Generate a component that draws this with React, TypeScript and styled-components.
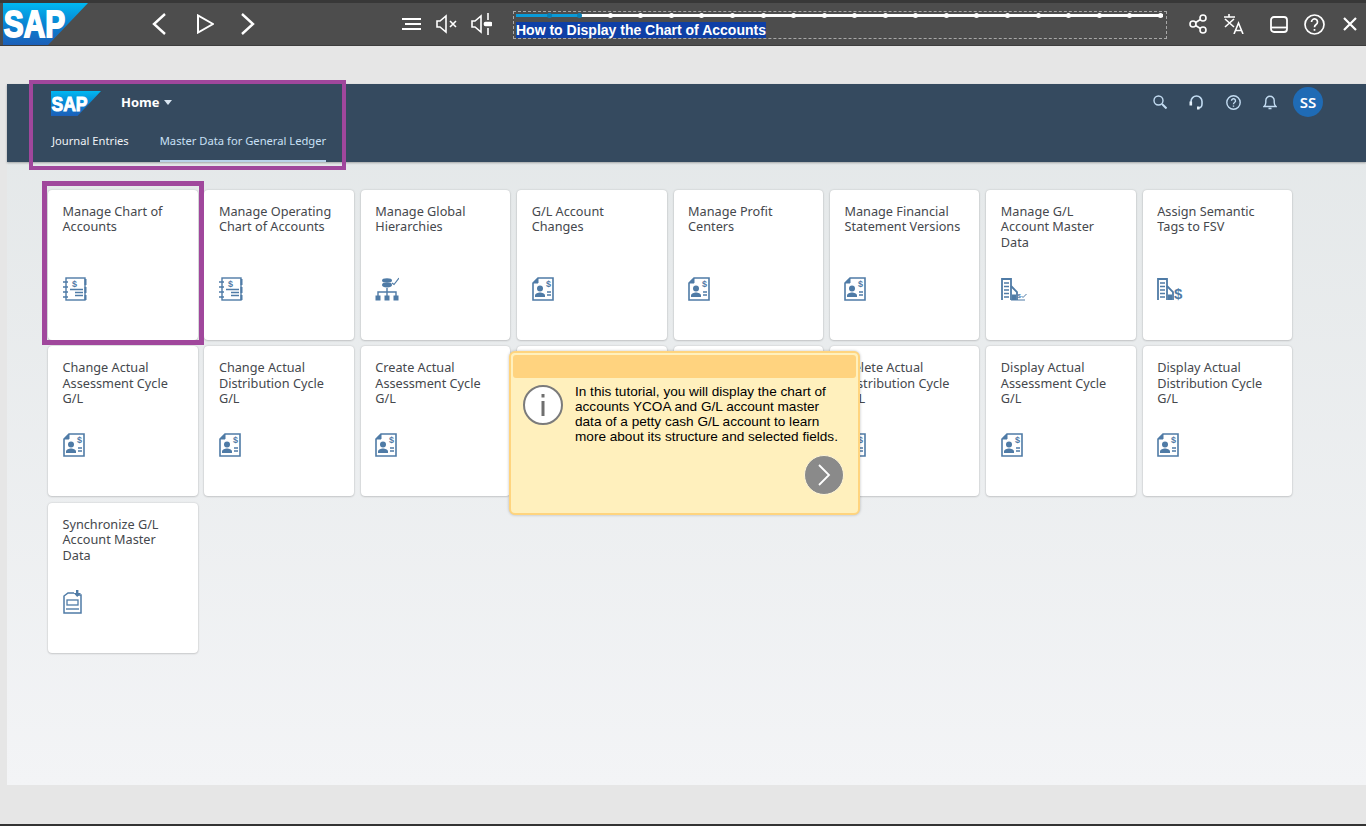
import React from 'react';
import styled, { createGlobalStyle } from 'styled-components';

const ICON_BLUE = '#4f7ba6';

const GlobalStyle = createGlobalStyle`
  html, body {
    margin: 0;
    padding: 0;
    background: #e6e6e6;
    overflow: hidden;
  }
  * { box-sizing: border-box; }
`;

const Page = styled.div`
  position: relative;
  width: 1366px;
  height: 826px;
  display: flex;
  flex-direction: column;
  background: #e6e6e6;
  font-family: 'Noto Sans', 'Open Sans', sans-serif;
`;

const PlayerBar = styled.header`
  height: 46px;
  display: flex;
  align-items: center;
  background: #4d4d4d;
  border-top: 3px solid #383838;
  border-bottom: 1px solid #3d3d3d;
`;

const PlayerLogo = styled.div`
  width: 88px;
  height: 42px;
  padding-left: 3px;
  flex: none;
`;

const PlayerGroup = styled.div<{ $left: number; $gap: number }>`
  display: flex;
  align-items: center;
  margin-left: ${(p) => p.$left}px;
  gap: ${(p) => p.$gap}px;
`;

const PlayerIcon = styled.svg<{ $stroke?: number; $shift?: number }>`
  display: block;
  fill: none;
  stroke: #fff;
  stroke-width: ${(p) => p.$stroke ?? 2};
  margin-left: ${(p) => p.$shift ?? 0}px;
  flex: none;
`;

const ProgressBox = styled.div`
  width: 654px;
  height: 28px;
  margin-left: 21px;
  margin-top: 2px;
  padding: 2px 2px 0;
  border: 1px dashed #a8a8a8;
`;

const Track = styled.div`
  position: relative;
  height: 3px;
  width: 647px;
  background: #fff;
  display: flex;
  justify-content: space-between;
  align-items: center;
`;

const TrackFill = styled.div`
  position: absolute;
  left: 0;
  top: 0;
  width: 62px;
  height: 3px;
  background: #0a9bd8;
`;

const TrackDot = styled.i<{ $done?: boolean; $hidden?: boolean }>`
  position: relative;
  width: 5px;
  height: 5px;
  border-radius: 50%;
  background: ${(p) => (p.$done ? '#0a7fb5' : '#fff')};
  visibility: ${(p) => (p.$hidden ? 'hidden' : 'visible')};
`;

const LessonTitle = styled.div`
  margin-top: 5px;
  display: inline-block;
  background: #0e3fa6;
  color: #fff;
  font: bold 14px/16px 'Liberation Sans', Arial, sans-serif;
`;

const Frame = styled.main`
  width: 1359px;
  height: 701px;
  margin: 38px 0 0 7px;
  display: flex;
  flex-direction: column;
  background: linear-gradient(180deg, #e3e7e8 0%, #f3f4f6 100%);
`;

const ShellHeader = styled.div`
  height: 78px;
  padding: 7px 43px 0 44px;
  background: #354a5f;
  box-shadow: 0 1px 2px rgba(0, 0, 0, 0.3);
  flex: none;
`;

const ShellTop = styled.div`
  height: 25px;
  display: flex;
  align-items: center;
`;

const HomeLabel = styled.span`
  margin: -3px 0 0 20px;
  color: #fff;
  font-size: 13px;
  font-weight: 700;
  font-family: 'Open Sans', sans-serif;
  line-height: 22px;
`;

const Caret = styled.span`
  width: 0;
  height: 0;
  margin: -2px 0 0 5px;
  border-left: 4.5px solid transparent;
  border-right: 4.5px solid transparent;
  border-top: 5px solid #d9e6f2;
`;

const ShellActions = styled.div`
  margin: -3px 0 0 auto;
  display: flex;
  align-items: center;
  gap: 22px;
`;

const ShellIcon = styled.svg`
  display: block;
  fill: none;
  stroke: #c3dcf2;
  stroke-width: 1.4;
  flex: none;
`;

const Avatar = styled.div`
  width: 30px;
  height: 30px;
  margin-left: -6px;
  border-radius: 50%;
  background: #1f6bb5;
  color: #fff;
  font-size: 15px;
  font-weight: 600;
  display: flex;
  align-items: center;
  justify-content: center;
`;

const TabRow = styled.nav`
  margin-top: 11px;
  display: flex;
  gap: 30px;
`;

const Tab = styled.div<{ $active?: boolean }>`
  height: 35px;
  padding-top: 6px;
  margin-left: 1px;
  font-size: 11.2px;
  line-height: 16px;
  color: ${(p) => (p.$active ? '#c9e0f5' : '#f0f3f6')};
  border-bottom: 2px solid ${(p) => (p.$active ? '#b9d3ea' : 'transparent')};
`;

const TileGrid = styled.section`
  padding: 27.5px 0 0 41px;
  display: grid;
  grid-template-columns: repeat(8, 149.5px);
  grid-auto-rows: 150px;
  column-gap: 6.9px;
  row-gap: 6.5px;
`;

const Tile = styled.article`
  padding: 14px 14.5px 0;
  background: #fff;
  border-radius: 4px;
  box-shadow: 0 0 2px rgba(0, 0, 0, 0.18), 0 1px 2px rgba(0, 0, 0, 0.12);
`;

const TileTitle = styled.div`
  height: 73px;
  color: #45484d;
  font-size: 12.7px;
  line-height: 15.5px;
`;

const Highlight = styled.div<{ $x: number; $y: number; $w: number; $h: number; $b: number }>`
  position: absolute;
  left: ${(p) => p.$x}px;
  top: ${(p) => p.$y}px;
  width: ${(p) => p.$w}px;
  height: ${(p) => p.$h}px;
  border: ${(p) => p.$b}px solid #a0479c;
  pointer-events: none;
`;

const Callout = styled.aside`
  position: absolute;
  left: 509px;
  top: 351px;
  width: 351px;
  height: 164px;
  padding: 2px;
  background: #fff0bd;
  border: 2px solid #ffd47e;
  border-radius: 6px;
  box-shadow: 0 0 3px rgba(0, 0, 0, 0.25);
  display: flex;
  flex-direction: column;
`;

const CalloutBand = styled.div`
  height: 23px;
  flex: none;
  background: #ffd37f;
  border-radius: 3px;
`;

const CalloutBody = styled.div`
  display: flex;
  padding: 6px 0 0 10px;
`;

const InfoBadge = styled.div`
  width: 40px;
  height: 40px;
  margin-top: 1px;
  flex: none;
  border-radius: 50%;
  background: #fff;
  border: 2px solid #7b7b7b;
  display: flex;
  align-items: center;
  justify-content: center;
`;

const InfoStem = styled.svg`
  display: block;
`;

const CalloutText = styled.p`
  margin: 0 0 0 12px;
  width: 272px;
  color: #000;
  font: 13.6px/15px 'Liberation Sans', Arial, sans-serif;
`;

const NextButton = styled.div`
  position: absolute;
  right: 14px;
  bottom: 18px;
  width: 40px;
  height: 40px;
  border-radius: 50%;
  background: #8a8a8a;
  border: 1px solid #fff6d8;
  display: flex;
  align-items: center;
  justify-content: center;
`;

const BottomEdge = styled.div`
  margin-top: auto;
  height: 2px;
  background: #333;
  flex: none;
`;

const TileIcon = styled.svg`
  display: block;
  fill: none;
  stroke: ${ICON_BLUE};
`;

const IconGlyph = styled.text<{ $size?: number }>`
  fill: ${ICON_BLUE};
  stroke: none;
  font: bold ${(p) => p.$size ?? 9}px 'Liberation Sans', Arial, sans-serif;
`;

const LogoSvg = styled.svg`
  display: block;
  flex: none;
`;

const LogoText = styled.text`
  fill: #fff;
  stroke: #fff;
  font-family: 'Liberation Sans', Arial, sans-serif;
  font-weight: 700;
`;

const SapLogo = ({ width, height, id, fontSize, y }: { width: number; height: number; id: string; fontSize: number; y: number }) => (
  <LogoSvg width={width} height={height} viewBox={`0 0 ${width} ${height}`}>
    <defs>
      <linearGradient id={id} x1="0" y1="0" x2="0" y2="1">
        <stop offset="0" stopColor="#00b8f1" />
        <stop offset="0.55" stopColor="#0a7fd0" />
        <stop offset="1" stopColor="#1c5fb8" />
      </linearGradient>
    </defs>
    <polygon points={`0,0 ${width},0 ${width * 0.53},${height} 0,${height}`} fill={`url(#${id})`} />
    <LogoText
      x={width * 0.01}
      y={y}
      fontSize={fontSize}
      textLength={width * 0.72}
      lengthAdjust="spacingAndGlyphs"
      strokeWidth={fontSize * 0.05}
    >
      SAP
    </LogoText>
  </LogoSvg>
);

const NotebookIcon = () => (
  <TileIcon width="24" height="24" viewBox="0 0 24 24">
    <rect x="3" y="1" width="19" height="22" strokeWidth="1.4" />
    <path d="M0 5h5M0 10h5M0 15h5M0 20h5" strokeWidth="1.5" />
    <path d="M22.5 2v6M22.5 10v6M22.5 18v5" strokeWidth="2" />
    <IconGlyph x="9" y="10">$</IconGlyph>
    <path d="M7 12.5h13M12 15.5h8M12 18.5h8" strokeWidth="1.3" />
  </TileIcon>
);

const LedgerDocIcon = () => (
  <TileIcon width="22" height="24" viewBox="0 0 22 24">
    <path d="M6 1h15v22H1V6z" strokeWidth="1.6" />
    <path d="M1 6h5V1z" fill={ICON_BLUE} strokeWidth="1" />
    <circle cx="8" cy="11.5" r="3" fill={ICON_BLUE} stroke="none" />
    <path d="M3 20v-1.5c0-2 3-3 5-3s5 1 5 3V20z" fill={ICON_BLUE} stroke="none" />
    <IconGlyph x="14" y="10">$</IconGlyph>
    <path d="M15 15h4M15 18h4" strokeWidth="1.3" />
  </TileIcon>
);

const HierarchyIcon = () => (
  <TileIcon width="24" height="24" viewBox="0 0 24 24">
    <ellipse cx="12" cy="3.5" rx="5" ry="2.2" fill={ICON_BLUE} stroke="none" />
    <ellipse cx="12" cy="8" rx="5" ry="2.4" fill={ICON_BLUE} stroke="none" />
    <path d="M17 6l2 1.5L24 1" strokeWidth="1.2" />
    <path d="M12 11v4M3 19v-4h18v4M12 15v4" strokeWidth="1.4" />
    <path d="M0.5 18.5h5v5h-5zM9.5 18.5h5v5h-5zM18.5 18.5h5v5h-5z" fill={ICON_BLUE} stroke="none" />
  </TileIcon>
);

const BuildingIcon = ({ check }: { check?: boolean }) => (
  <TileIcon width="26" height="24" viewBox="0 0 26 24">
    <path d="M1 23V2h9v21" strokeWidth="1.8" />
    <path d="M3 6h5M3 9.5h5M3 13h5M3 16.5h5M3 20h5" strokeWidth="1.6" />
    <path d="M10 9l6 6v8" strokeWidth="1.8" />
    <path d="M11 17.5h4V23h-4z" fill={ICON_BLUE} stroke="none" />
    {check ? (
      <>
        <IconGlyph x="16.5" y="21" $size={6}>$</IconGlyph>
        <path d="M20.5 19l1.5 1.5L25.5 17M10 23h14" strokeWidth="1" />
      </>
    ) : (
      <IconGlyph x="17" y="22" $size={15}>$</IconGlyph>
    )}
  </TileIcon>
);

const SyncIcon = () => (
  <TileIcon width="19" height="24" viewBox="0 0 19 24">
    <path d="M14 5h4v18H1V6l4-3h6" strokeWidth="1.5" />
    <path d="M13 0h2.4v3H18l-3.8 4-3.6-4H13z" fill={ICON_BLUE} stroke="none" />
    <rect x="4" y="10" width="11" height="5" strokeWidth="1.3" />
    <path d="M3 19h13" strokeWidth="1.4" />
  </TileIcon>
);

type TileData = { title?: string; icon?: React.ReactNode };

const tiles: TileData[] = [
  { title: 'Manage Chart of Accounts', icon: <NotebookIcon /> },
  { title: 'Manage Operating Chart of Accounts', icon: <NotebookIcon /> },
  { title: 'Manage Global Hierarchies', icon: <HierarchyIcon /> },
  { title: 'G/L Account Changes', icon: <LedgerDocIcon /> },
  { title: 'Manage Profit Centers', icon: <LedgerDocIcon /> },
  { title: 'Manage Financial Statement Versions', icon: <LedgerDocIcon /> },
  { title: 'Manage G/L Account Master Data', icon: <BuildingIcon check /> },
  { title: 'Assign Semantic Tags to FSV', icon: <BuildingIcon /> },
  { title: 'Change Actual Assessment Cycle G/L', icon: <LedgerDocIcon /> },
  { title: 'Change Actual Distribution Cycle G/L', icon: <LedgerDocIcon /> },
  { title: 'Create Actual Assessment Cycle G/L', icon: <LedgerDocIcon /> },
  {},
  {},
  { title: 'Delete Actual Distribution Cycle G/L', icon: <LedgerDocIcon /> },
  { title: 'Display Actual Assessment Cycle G/L', icon: <LedgerDocIcon /> },
  { title: 'Display Actual Distribution Cycle G/L', icon: <LedgerDocIcon /> },
  { title: 'Synchronize G/L Account Master Data', icon: <SyncIcon /> },
];

const steps = Array.from({ length: 22 }, (_, i) => i);

const App = () => (
  <Page>
    <GlobalStyle />
    <PlayerBar>
      <PlayerLogo>
        <SapLogo width={85} height={42} id="playerLogo" fontSize={37} y={33.5} />
      </PlayerLogo>
      <PlayerGroup $left={63} $gap={29}>
        <PlayerIcon width="16" height="22" viewBox="0 0 16 22" $stroke={2.4}>
          <path d="M14 1L3 11l11 10" />
        </PlayerIcon>
        <PlayerIcon width="18" height="20" viewBox="0 0 18 20">
          <path d="M2 1.5v17L17 10z" />
        </PlayerIcon>
        <PlayerIcon width="16" height="22" viewBox="0 0 16 22" $stroke={2.4} $shift={-3}>
          <path d="M2 1l11 10L2 21" />
        </PlayerIcon>
      </PlayerGroup>
      <PlayerGroup $left={146} $gap={14.5}>
        <PlayerIcon width="19" height="14" viewBox="0 0 19 14">
          <path d="M0 2h19M3 7h16M0 12h19" />
        </PlayerIcon>
        <PlayerIcon width="21" height="20" viewBox="0 0 21 20" $stroke={1.6}>
          <path d="M1 7v6h3l6 5V2L4 7zM14 7l6 6M20 7l-6 6" />
        </PlayerIcon>
        <PlayerIcon width="21" height="22" viewBox="0 0 21 22" $stroke={1.6}>
          <path d="M1 8v6h3l6 5V3L4 8zM17 0v7M17 15v7" />
          <rect x="13.5" y="9.5" width="7" height="3" rx="1" fill="#fff" />
        </PlayerIcon>
      </PlayerGroup>
      <ProgressBox>
        <Track>
          <TrackFill />
          {steps.map((i) => (
            <TrackDot key={i} $hidden={i === 0} $done={i === 1 || i === 2} />
          ))}
        </Track>
        <LessonTitle>How to Display the Chart of Accounts</LessonTitle>
      </ProgressBox>
      <PlayerGroup $left={22} $gap={16}>
        <PlayerIcon width="18" height="20" viewBox="0 0 18 20" $stroke={1.6}>
          <circle cx="4" cy="10" r="3" />
          <circle cx="14" cy="4" r="3" />
          <circle cx="14" cy="16" r="3" />
          <path d="M6.6 8.5l4.8-3M6.6 11.5l4.8 3" />
        </PlayerIcon>
        <PlayerIcon width="22" height="20" viewBox="0 0 22 20" $stroke={1.6}>
          <path d="M1 3h11M6 0v3M2 5l9 8M11 5l-9 8M11 20l4.5-11L20 20M12.5 16.5h6" />
        </PlayerIcon>
        <PlayerIcon width="18" height="17" viewBox="0 0 18 17" $stroke={1.8} $shift={9}>
          <rect x="1" y="1" width="16" height="15" rx="3" />
          <path d="M1 11.5h16" />
        </PlayerIcon>
        <PlayerIcon width="21" height="21" viewBox="0 0 21 21" $stroke={1.7}>
          <circle cx="10.5" cy="10.5" r="9.5" />
          <path d="M7.5 8a3 3 0 1 1 4.6 2.5c-1 .7-1.6 1.3-1.6 2.7M10.5 15v1.8" />
        </PlayerIcon>
        <PlayerIcon width="14" height="14" viewBox="0 0 14 14" $stroke={2.2} $shift={2}>
          <path d="M1 1l12 12M13 1L1 13" />
        </PlayerIcon>
      </PlayerGroup>
    </PlayerBar>

    <Frame>
      <ShellHeader>
        <ShellTop>
          <SapLogo width={50} height={25} id="shellLogo" fontSize={21} y={19.5} />
          <HomeLabel>Home</HomeLabel>
          <Caret />
          <ShellActions>
            <ShellIcon width="14" height="14" viewBox="0 0 14 14">
              <circle cx="5.5" cy="5.5" r="4.5" />
              <path d="M9 9l4.5 4.5" strokeWidth="2" />
            </ShellIcon>
            <ShellIcon width="15" height="15" viewBox="0 0 15 15">
              <path d="M2 8V6.5a5.5 5.5 0 0 1 11 0V9c0 2.5-1.5 4-4 4" strokeWidth="1.6" />
              <path d="M.5 6.5h2.6v4H.5zM8 11.5h2.5v3H8z" fill="#e6f1fb" stroke="none" />
            </ShellIcon>
            <ShellIcon width="15" height="15" viewBox="0 0 15 15">
              <circle cx="7.5" cy="7.5" r="6.7" />
              <path d="M5.5 5.8a2 2 0 1 1 3 1.7c-.7.4-1 .9-1 1.8M7.5 10.5v1.3" />
            </ShellIcon>
            <ShellIcon width="14" height="15" viewBox="0 0 14 15">
              <path d="M1 11.5h12c-1.2-1-1.8-2-1.8-4V5.5a4.2 4.2 0 0 0-8.4 0v2c0 2-.6 3-1.8 4zM5.5 13.5h3" />
            </ShellIcon>
            <Avatar>SS</Avatar>
          </ShellActions>
        </ShellTop>
        <TabRow>
          <Tab>Journal Entries</Tab>
          <Tab $active>Master Data for General Ledger</Tab>
        </TabRow>
      </ShellHeader>
      <TileGrid>
        {tiles.map((tile, i) => (
          <Tile key={i}>
            <TileTitle>{tile.title}</TileTitle>
            {tile.icon}
          </Tile>
        ))}
      </TileGrid>
    </Frame>

    <BottomEdge />

    <Highlight $x={29} $y={80} $w={317} $h={90} $b={4} />
    <Highlight $x={42} $y={181} $w={162} $h={164} $b={5} />

    <Callout>
      <CalloutBand />
      <CalloutBody>
        <InfoBadge>
          <InfoStem width="4" height="22" viewBox="0 0 4 22">
            <rect x="0.5" y="0" width="3" height="3.5" fill="#6f6f6f" />
            <rect x="0.5" y="7" width="3" height="15" fill="#6f6f6f" />
          </InfoStem>
        </InfoBadge>
        <CalloutText>
          In this tutorial, you will display the chart of accounts YCOA and G/L account master data of a petty cash G/L
          account to learn more about its structure and selected fields.
        </CalloutText>
      </CalloutBody>
      <NextButton>
        <svg width="14" height="24" viewBox="0 0 14 24" fill="none" stroke="#fff" strokeWidth="1.8">
          <path d="M2 2l10 10L2 22" />
        </svg>
      </NextButton>
    </Callout>
  </Page>
);

export default App;
